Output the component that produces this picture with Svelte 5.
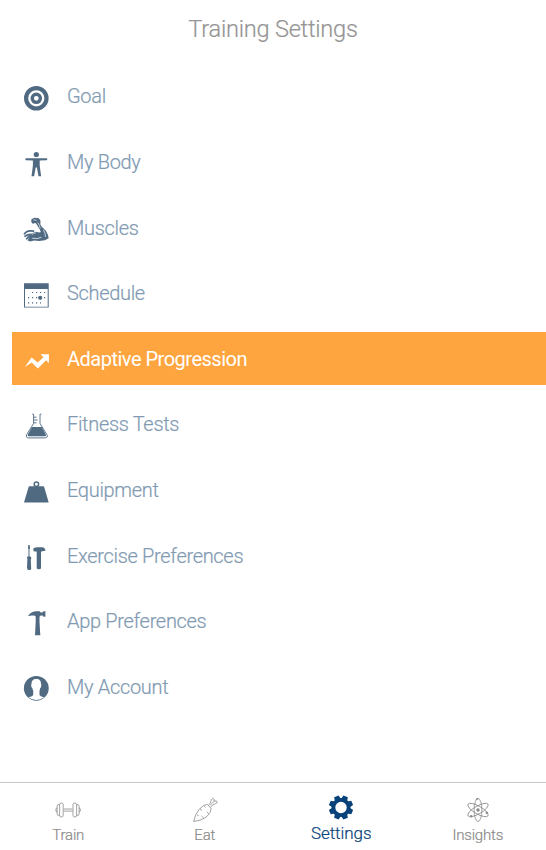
<script lang="ts">
  const items: { id: string; label: string }[] = [
    { id: 'goal', label: 'Goal' },
    { id: 'body', label: 'My Body' },
    { id: 'muscles', label: 'Muscles' },
    { id: 'schedule', label: 'Schedule' },
    { id: 'progression', label: 'Adaptive Progression' },
    { id: 'tests', label: 'Fitness Tests' },
    { id: 'equipment', label: 'Equipment' },
    { id: 'exercise', label: 'Exercise Preferences' },
    { id: 'app', label: 'App Preferences' },
    { id: 'account', label: 'My Account' }
  ];

  const tabs: { id: string; label: string }[] = [
    { id: 'train', label: 'Train' },
    { id: 'eat', label: 'Eat' },
    { id: 'settings', label: 'Settings' },
    { id: 'insights', label: 'Insights' }
  ];

  const teeth = [22.5, 67.5, 112.5, 157.5, 202.5, 247.5, 292.5, 337.5];

  let selected = $state('progression');
  let activeTab = $state('settings');
</script>

<main>
  <h1>Training Settings</h1>

  <!-- Settings list -->
  <ul>
    {#each items as item}
      <li>
        <button class="row" class:selected={selected === item.id} onclick={() => (selected = item.id)}>
          <svg viewBox="0 0 26 26" width="26" height="26" fill="currentColor">
            {#if item.id === 'goal'}
              <circle cx="13.3" cy="13.3" r="10.2" fill="none" stroke="currentColor" stroke-width="4.2" />
              <circle cx="13.3" cy="13.3" r="4.1" fill="none" stroke="currentColor" stroke-width="3.4" />
            {:else if item.id === 'body'}
              <circle cx="13.3" cy="3.5" r="2.6" />
              <path d="M3.2 7.3h20.2q.9 0 .9 1t-.9 1l-6.7.3v5l1.4 10.7h-2.6l-1.6-8.9h-1.2l-1.6 8.9H8.5l1.4-10.7v-5l-6.7-.3q-.9 0-.9-1t.9-1z" />
            {:else if item.id === 'muscles'}
              <path d="M8.4 3.2 11.3 1.8l4.5.5 1.7 2.4-.2 3.7 1.7 2.6 3.9 3.8 2.1 4.2.7 3.2-3.8 2-5.7.8-5.2-.4-3.6.8-2.9-.8 1.9-3.5 1.7-3.4 4.3-2 4 .9 1.4-.6-1.1-2.7-1.8-2.8-1.5-2.5-1-.9-2.8.6-1.3-1.6z" />
              <path d="M1 18.4q2.5-3.8 6.4-3.6l3.8.3M1.4 20.6q3-2.4 6.6-2.3M3.2 23.4q1.6-3 5-3.6" fill="none" stroke="currentColor" stroke-width="1.7" />
              <path d="M8.8 18.7q1.6-2 4-1.8M9.2 22.2q5 1.2 9.2-.9M20.4 13.7q2.3 3.6 2 7.2M14.7 6.4q1.7 2.6 2.6 6M10.5 3.7l3 .7" fill="none" stroke="#fff" stroke-width=".7" />
            {:else if item.id === 'schedule'}
              <path d="M1 1.2h24.7v24.4H1zM2 7v17.7h22.7V7z" fill-rule="evenodd" />
              <path d="M9 10.5h13.2M5 15.7h17.2M5 20.9h13" fill="none" stroke="currentColor" stroke-width="1.2" stroke-dasharray="1.2 2.8" />
              <circle cx="17.2" cy="15.8" r="2.1" />
            {:else if item.id === 'progression'}
              <path d="m1.8 19.1 6.8-9.5 6.1 5 5.8-5.4-3-2.9h8.4v9l-2.8-3-8.2 8.1-6.2-6z" />
            {:else if item.id === 'tests'}
              <path d="M9.2 1.2h1.4v9.3L3.7 21.6q-1.4 3.3 2.2 3.3h15.9q3.6 0 2.1-3.3L17 10.5V1.2h1.4" fill="none" stroke="currentColor" stroke-width=".9" />
              <path d="M8.9 14.1h9.9l3.8 6.9q1.1 2.3-1.1 2.3H6.1q-2.1 0-1-2.3z" />
              <path d="M10.6 4.2h3M10.6 7h4M10.6 9.8h3" stroke="currentColor" stroke-width=".9" />
            {:else if item.id === 'equipment'}
              <circle cx="13.4" cy="5.3" r="2.2" fill="none" stroke="currentColor" stroke-width="1.5" />
              <path d="M6.6 7.2h13.6q.8 0 1 .8l4.5 15.4H1L5.6 8q.2-.8 1-.8z" />
            {:else if item.id === 'exercise'}
              <path d="M5.3 1h1.4l.3 3.2-.5 1v7.2h1q1 .8.7 2.3l-.4 1 .4 9q-.1 1.4-2.1 1.4T4 23.7l.4-9-.5-1q0-1 .8-1.3h.8V5.2l-.5-1z" />
              <path d="M10.4 4.2q1.9-1 4.7-.9h4.2q2.7.2 3.2 3.4l-3.3.5-1.2.6v16.5q-.2 1-2.1 1t-2.2-1V7.6h-2.4l-.9-.8z" />
            {:else if item.id === 'app'}
              <path d="M4.9 6.1q2.7-4.3 7.7-4.8h4l1.2 1.1h1.5l1.2-1.1h1.9v5.5h-1.6l-1.4-1.2h-1.7l-1.2 1.2v5l.8 13.4h-5.3l.7-13.4V6.6q-.7-.9-2.3-1.1-3-.2-5.5.6z" />
            {:else}
              <circle cx="13.3" cy="13.3" r="12.4" />
              <path d="M13.3 4c3.5 0 4.8 2 4.7 5l.4 1.1-.5 2.5-.7.5-.7 3v4q.3 1.2 4.7 2.2-3.3 2.6-7.9 2.6t-7.8-2.6q4.4-1 4.7-2.2v-4l-.9-3-.7-.5-.5-2.4.4-1.1C8.4 6 9.9 4 13.3 4z" fill="#fff" />
            {/if}
          </svg>
          <span>{item.label}</span>
        </button>
      </li>
    {/each}
  </ul>

  <!-- Bottom tabs -->
  <nav>
    {#each tabs as tab}
      <button class="tab" class:active={activeTab === tab.id} onclick={() => (activeTab = tab.id)}>
        <svg viewBox="0 0 26 26" width="26" height="26" fill="none" stroke="currentColor" stroke-width=".8">
          {#if tab.id === 'train'}
            <path d="M8.7 12h8.9M8.7 14.1h8.9M8.2 7.6q0-1.6-1.8-1.6t-1.8 1.6v10.8q0 1.6 1.8 1.6t1.8-1.6zM21.6 7.6q0-1.6-1.8-1.6T18 7.6v10.8q0 1.6 1.8 1.6t1.8-1.6zM4.6 7.5q-2.5-.2-2.5 1.7v7.6q0 1.9 2.5 1.7M2.1 11q-1.3 0-1.3 2t1.3 2M21.6 7.5q2.5-.2 2.5 1.7v7.6q0 1.9-2.5 1.7M24.1 11q1.3 0 1.3 2t-1.3 2" />
          {:else if tab.id === 'eat'}
            <path d="M1.6 24.5Q3 17.3 7.2 12.3q4.3-4.9 8.1-4.9l3.8 4q.3 3.6-3.5 7.3-4.6 4.6-14 5.8zM16.6 8.2q1.8-1.8 2.4-4.3.5-2.2 2.2-2.4 1.8.2.8 2.7 2.5-1 3.2.6.2 1.7-2.4 2.2-2.6.7-4.2 3.4M22 4.2l-3.8 4.2M8 11.8l2.2 1.8M12 9.2l1.3 1.3M5 17.6l1.8 1.4M11.8 21.2l-2.2-2.1M16.6 16.6l-1.9-1.7" />
          {:else if tab.id === 'settings'}
            <g transform="translate(13 12.5)">
              <circle r="7.6" stroke-width="3.8" />
              {#each teeth as angle}
                <path transform="rotate({angle})" d="M-3.2-8.2-2.4-12.1h4.8l.8 3.9z" fill="currentColor" stroke="none" />
              {/each}
            </g>
          {:else}
            <ellipse cx="13" cy="13" rx="3.9" ry="11.6" />
            <ellipse cx="13" cy="13" rx="3.9" ry="11.6" transform="rotate(60 13 13)" />
            <ellipse cx="13" cy="13" rx="3.9" ry="11.6" transform="rotate(-60 13 13)" />
            <g fill="currentColor" stroke="none">
              <circle cx="13" cy="13" r="1.7" />
              <circle cx="12" cy="2.1" r="1" />
              <circle cx="21.8" cy="15.8" r="1.2" />
              <circle cx="6.2" cy="19.2" r="1.2" />
            </g>
          {/if}
        </svg>
        <span>{tab.label}</span>
      </button>
    {/each}
  </nav>
</main>

<style>
  :global(body) {
    background: #fff;
  }

  main {
    display: flex;
    flex-direction: column;
    height: 850px;
    overflow: hidden;
    font-family: Roboto, 'Liberation Sans', sans-serif;
    font-weight: 300;
    -webkit-text-stroke: 0.2px currentColor;
  }

  h1 {
    box-sizing: border-box;
    height: 65.5px;
    margin: 0;
    padding-top: 15px;
    text-align: center;
    color: #959595;
    font-size: 23.6px;
    font-weight: 300;
    line-height: 28px;
    letter-spacing: -0.24px;
  }

  ul {
    flex: 1;
    margin: 0;
    padding: 3.7px 0 0 12px;
    list-style: none;
  }

  li {
    height: 65.6px;
  }

  button {
    border: none;
    background: none;
    font: inherit;
    cursor: pointer;
  }

  .row {
    display: flex;
    align-items: center;
    box-sizing: border-box;
    width: 100%;
    height: 53.5px;
    padding: 0 0 0 11px;
    color: #506a82;
    font-size: 20px;
  }

  .row svg {
    margin-top: 4.4px;
  }

  .row span {
    margin: 1px 0 0 18px;
    line-height: 24px;
    letter-spacing: -0.32px;
    color: #819ab2;
  }

  .row.selected {
    background: #ffa53f;
  }

  .row.selected svg,
  .row.selected span {
    color: #fff;
  }

  .row.selected span {
    font-weight: 400;
    letter-spacing: -0.5px;
    -webkit-text-stroke: 0;
  }

  nav {
    display: flex;
    box-sizing: border-box;
    height: 68px;
    border-top: 1px solid #c8c8c8;
  }

  .tab {
    display: flex;
    flex: 1;
    flex-direction: column;
    align-items: center;
    padding: 14px 0 0;
    color: #8a8a8a;
    font-size: 15px;
    letter-spacing: -0.2px;
  }

  .tab span {
    margin-top: 3px;
    line-height: 18px;
  }

  .tab.active {
    padding-top: 12px;
    color: #08427a;
    font-size: 17px;
    letter-spacing: -0.04px;
  }
</style>
